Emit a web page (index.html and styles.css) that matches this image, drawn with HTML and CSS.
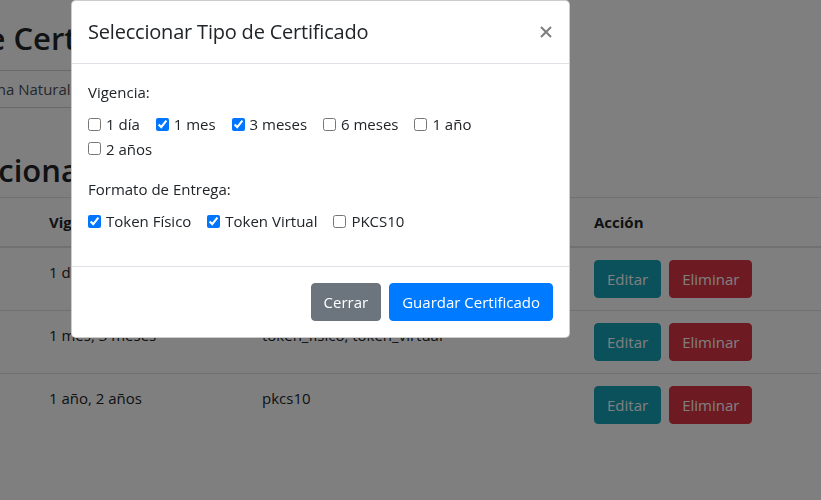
FILE: index.html
```html
<!DOCTYPE html>
<html lang="es">
<head>
<meta charset="utf-8">
<title>Tipos de Certificado</title>
<link rel="stylesheet" href="styles.css">
</head>
<body>
<main class="page">
  <h2 class="page-title">Registro de Certificados</h2>
  <select class="form-control persona-select"><option>Persona Natural</option></select>
  <h2 class="section-title">Tipos Seleccionados</h2>
  <table class="table">
    <thead>
      <tr>
        <th class="col-id">#</th>
        <th class="col-vig">Vigencia</th>
        <th class="col-fmt">Formato de Entrega</th>
        <th>Acción</th>
      </tr>
    </thead>
    <tbody>
      <tr>
        <td>1</td>
        <td>1 día</td>
        <td>token_fisico</td>
        <td><div class="actions"><button class="btn btn-info">Editar</button><button class="btn btn-danger">Eliminar</button></div></td>
      </tr>
      <tr>
        <td>2</td>
        <td>1 mes, 3 meses</td>
        <td>token_fisico, token_virtual</td>
        <td><div class="actions"><button class="btn btn-info">Editar</button><button class="btn btn-danger">Eliminar</button></div></td>
      </tr>
      <tr>
        <td>3</td>
        <td>1 año, 2 años</td>
        <td>pkcs10</td>
        <td><div class="actions"><button class="btn btn-info">Editar</button><button class="btn btn-danger">Eliminar</button></div></td>
      </tr>
    </tbody>
  </table>
</main>

<div class="backdrop"></div>

<div class="modal" role="dialog" aria-labelledby="modalTitle">
  <div class="modal-content">
    <div class="modal-header">
      <h5 class="modal-title" id="modalTitle">Seleccionar Tipo de Certificado</h5>
      <button type="button" class="close" aria-label="Cerrar">
        <svg width="12" height="12" viewBox="0 0 12 12" aria-hidden="true"><path d="M1 1 L11 11 M11 1 L1 11" stroke="currentColor" stroke-width="2.1" fill="none"/></svg>
      </button>
    </div>
    <div class="modal-body">
      <div class="form-group">
        <label class="group-label">Vigencia:</label>
        <div class="check-list">
          <div class="form-check-inline"><input class="form-check-input" type="checkbox" id="v1"><label class="form-check-label" for="v1">1 día</label></div>
          <div class="form-check-inline"><input class="form-check-input" type="checkbox" id="v2" checked><label class="form-check-label" for="v2">1 mes</label></div>
          <div class="form-check-inline"><input class="form-check-input" type="checkbox" id="v3" checked><label class="form-check-label" for="v3">3 meses</label></div>
          <div class="form-check-inline"><input class="form-check-input" type="checkbox" id="v4"><label class="form-check-label" for="v4">6 meses</label></div>
          <div class="form-check-inline"><input class="form-check-input" type="checkbox" id="v5"><label class="form-check-label" for="v5">1 año</label></div>
          <div class="form-check-inline"><input class="form-check-input" type="checkbox" id="v6"><label class="form-check-label" for="v6">2 años</label></div>
        </div>
      </div>
      <div class="form-group">
        <label class="group-label">Formato de Entrega:</label>
        <div class="check-list">
          <div class="form-check-inline"><input class="form-check-input" type="checkbox" id="f1" checked><label class="form-check-label" for="f1">Token Físico</label></div>
          <div class="form-check-inline"><input class="form-check-input" type="checkbox" id="f2" checked><label class="form-check-label" for="f2">Token Virtual</label></div>
          <div class="form-check-inline"><input class="form-check-input" type="checkbox" id="f3"><label class="form-check-label" for="f3">PKCS10</label></div>
        </div>
      </div>
    </div>
    <div class="modal-footer">
      <button type="button" class="btn btn-secondary">Cerrar</button>
      <button type="button" class="btn btn-primary">Guardar Certificado</button>
    </div>
  </div>
</div>
</body>
</html>
```
FILE: styles.css
```css
* { box-sizing: border-box; }

html, body {
  margin: 0;
  height: 500px;
  overflow: hidden;
}

body {
  font-family: "Open Sans", "Noto Sans", "Liberation Sans", sans-serif;
  font-size: 15px;
  line-height: 24px;
  color: #212529;
  background: #fff;
}

/* ---------- background page ---------- */
.page {
  margin-left: -163px;
  width: 1120px;
  padding-top: 19px;
}

.page-title,
.section-title {
  font-size: 31px;
  font-weight: 600;
  line-height: 38px;
  margin: 0;
}

.page-title { margin-bottom: 13px; }

.persona-select {
  display: block;
  width: 320px;
  height: 38px;
  margin-left: 103px;
  padding: 6px 12px;
  font: inherit;
  color: #495057;
  background: #fff;
  border: 1px solid #ced4da;
  border-radius: 4px;
}

.section-title {
  margin-top: 43px;
  margin-bottom: 8px;
  margin-left: -3px;
}

.table {
  width: 100%;
  border-collapse: collapse;
  color: #212529;
}

.table th,
.table td {
  padding: 12px;
  text-align: left;
  vertical-align: top;
  border-top: 1px solid #dee2e6;
}

.table thead th {
  vertical-align: bottom;
  border-bottom: 2px solid #dee2e6;
  font-weight: 700;
}

.col-id { width: 200px; }
.col-vig { width: 213px; }
.col-fmt { width: 332px; }

.actions {
  display: flex;
  gap: 8px;
}

/* ---------- buttons ---------- */
.btn {
  display: inline-block;
  font: inherit;
  font-weight: 400;
  line-height: 24px;
  padding: 6px 12px;
  border: 1px solid transparent;
  border-radius: 4px;
  color: #fff;
  cursor: pointer;
}

.btn-info { background: #17a2b8; border-color: #17a2b8; }
.btn-danger { background: #dc3545; border-color: #dc3545; }
.btn-secondary { background: #6c757d; border-color: #6c757d; }
.btn-primary { background: #007bff; border-color: #007bff; }

/* ---------- backdrop & modal ---------- */
.backdrop {
  position: fixed;
  inset: 0;
  background: rgba(0, 0, 0, 0.5);
}

.modal {
  position: absolute;
  top: 0;
  left: 71px;
  width: 499px;
}

.modal-content {
  display: flex;
  flex-direction: column;
  background: #fff;
  border: 1px solid rgba(0, 0, 0, 0.2);
  border-radius: 4.8px;
}

.modal-header {
  display: flex;
  align-items: flex-start;
  justify-content: space-between;
  padding: 16px;
  border-bottom: 1px solid #dee2e6;
}

.modal-title {
  margin: 0;
  font-size: 20px;
  font-weight: 400;
  line-height: 30px;
  letter-spacing: -0.2px;
}

.close {
  display: flex;
  align-items: center;
  justify-content: center;
  width: 46px;
  height: 62px;
  margin: -16px -16px -16px auto;
  padding: 0;
  background: transparent;
  border: 0;
  color: #000;
  opacity: 0.5;
  cursor: pointer;
}

.modal-body {
  padding: 16px;
}

.form-group { margin-bottom: 16px; }

.group-label {
  display: inline-block;
  margin-bottom: 8px;
}

.form-check-inline {
  display: inline-flex;
  align-items: center;
  margin-right: 12px;
}

.form-check-input {
  width: 13px;
  height: 13px;
  margin: 0 5px 0 0;
}

.form-check-label { margin-bottom: 0; }

.modal-footer {
  display: flex;
  flex-wrap: wrap;
  align-items: center;
  justify-content: flex-end;
  padding: 12px;
  border-top: 1px solid #dee2e6;
}

.modal-footer > .btn { margin: 4px; }
```
